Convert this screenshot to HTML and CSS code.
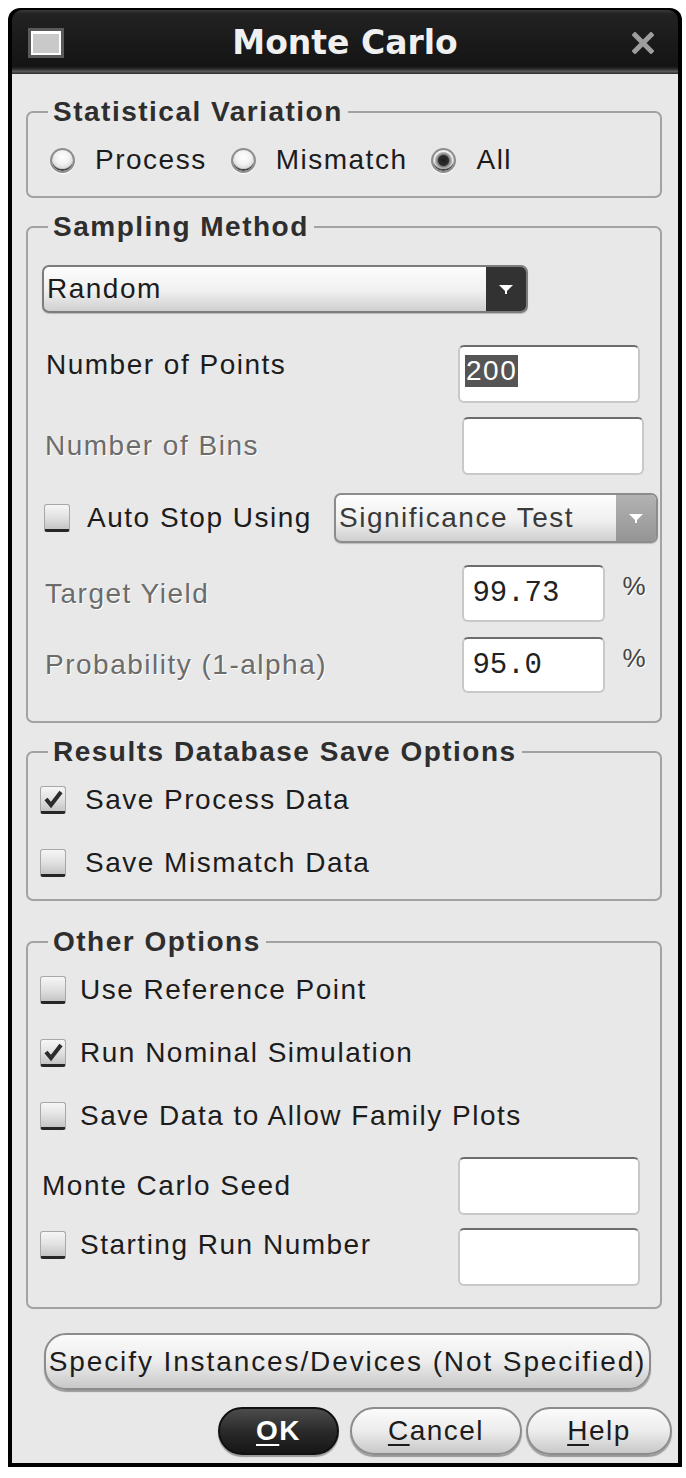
FILE: index.html
```html
<!DOCTYPE html>
<html lang="en">
<head>
<meta charset="utf-8">
<title>Monte Carlo</title>
<link rel="stylesheet" href="styles.css">
</head>
<body>
<div class="window">
  <div class="titlebar">
    <svg class="win-icon" width="36" height="30" viewBox="0 0 36 30">
      <rect x="0" y="0" width="36" height="30" fill="#5a5a5a"/>
      <rect x="3" y="3" width="30" height="24" fill="#ffffff"/>
      <rect x="5" y="6" width="26" height="19" fill="#c9c9c9"/>
    </svg>
    <div class="title">Monte Carlo</div>
    <svg class="close" width="22" height="22" viewBox="0 0 22 22">
      <path d="M3 3 L19 19 M19 3 L3 19" stroke="#9d9d9d" stroke-width="5" stroke-linecap="square"/>
    </svg>
  </div>

  <div class="client">
    <fieldset class="group g-stat">
      <legend>Statistical Variation</legend>
      <div class="radios">
        <span class="radio"><span class="rb"></span>Process</span>
        <span class="radio"><span class="rb"></span>Mismatch</span>
        <span class="radio"><span class="rb on"></span>All</span>
      </div>
    </fieldset>

    <fieldset class="group g-sampling">
      <legend>Sampling Method</legend>
      <div class="combo combo-random">
        <span class="combo-text">Random</span>
        <span class="combo-arrow"><svg width="16" height="10" viewBox="0 0 16 10"><path d="M1 1 H15 L8 8 Z" fill="#fff"/><rect x="7" y="7" width="2" height="3" fill="#fff"/></svg></span>
      </div>
      <div class="field-row r-points">
        <span class="lbl top">Number of Points</span>
        <span class="input in-points"><span class="sel">200</span></span>
      </div>
      <div class="field-row r-bins">
        <span class="lbl dis">Number of Bins</span>
        <span class="input in-bins"></span>
      </div>
      <div class="field-row r-auto">
        <span class="check-row"><span class="cb"></span>Auto Stop Using</span>
        <div class="combo combo-sig">
          <span class="combo-text">Significance Test</span>
          <span class="combo-arrow light"><svg width="16" height="10" viewBox="0 0 16 10"><path d="M1 1 H15 L8 8 Z" fill="#fff"/><rect x="7" y="7" width="2" height="3" fill="#fff"/></svg></span>
        </div>
      </div>
      <div class="field-row r-target">
        <span class="lbl dis">Target Yield</span>
        <span class="input in-num mono">99.73</span>
        <span class="pct">%</span>
      </div>
      <div class="field-row r-prob">
        <span class="lbl dis">Probability (1-alpha)</span>
        <span class="input in-num mono">95.0</span>
        <span class="pct">%</span>
      </div>
    </fieldset>

    <fieldset class="group g-results">
      <legend>Results Database Save Options</legend>
      <div class="check-row r-first"><span class="cb checked"><svg width="22" height="22" viewBox="0 0 22 22"><path d="M4 11 L9 17 L19 4" stroke="#2b2b2b" stroke-width="4" fill="none"/></svg></span>Save Process Data</div>
      <div class="check-row r-next"><span class="cb"></span>Save Mismatch Data</div>
    </fieldset>

    <fieldset class="group g-other">
      <legend>Other Options</legend>
      <div class="check-row r-first"><span class="cb"></span>Use Reference Point</div>
      <div class="check-row r-next"><span class="cb checked"><svg width="22" height="22" viewBox="0 0 22 22"><path d="M4 11 L9 17 L19 4" stroke="#2b2b2b" stroke-width="4" fill="none"/></svg></span>Run Nominal Simulation</div>
      <div class="check-row r-next"><span class="cb"></span>Save Data to Allow Family Plots</div>
      <div class="field-row r-seed">
        <span class="lbl">Monte Carlo Seed</span>
        <span class="input in-seed"></span>
      </div>
      <div class="field-row r-start">
        <span class="check-row top"><span class="cb"></span>Starting Run Number</span>
        <span class="input in-seed"></span>
      </div>
    </fieldset>

    <div class="btn btn-specify">Specify Instances/Devices (Not Specified)</div>

    <div class="btn-row">
      <div class="btn btn-ok"><u>O</u>K</div>
      <div class="btn btn-cancel"><u>C</u>ancel</div>
      <div class="btn btn-help"><u>H</u>elp</div>
    </div>
  </div>
</div>
</body>
</html>
```

FILE: styles.css
```css
* { box-sizing: border-box; }
html, body { margin: 0; background: #ffffff; }
body {
  font-family: "Liberation Sans", Arial, sans-serif;
  font-size: 28px;
  letter-spacing: 1.5px;
  color: #1c1c1c;
}

.window {
  width: 674px;
  margin: 8px 0 0 8px;
  background: #000;
  border-radius: 12px 12px 0 0;
  padding: 2px 4px 4px;
}

.titlebar {
  height: 64px;
  display: grid;
  grid-template-columns: 1fr auto 1fr;
  align-items: center;
  padding: 2px 16px 0;
  border-radius: 10px 10px 0 0;
  background: linear-gradient(#3a3a3a 0, #222 4px, #1a1a1a 50%, #141414 88%, #2a2a2a 92%, #5a5a5a 96%, #2a2a2a 100%);
}
.win-icon { justify-self: start; display: block; }
.title {
  font-family: "DejaVu Sans", sans-serif;
  font-weight: bold;
  font-size: 33px;
  letter-spacing: 0;
  color: #f0f0f0;
  line-height: 40px;
}
.close { justify-self: end; margin-right: 8px; display: block; }

.client {
  background: #e8e8e8;
  padding: 22px 16px 8px 14px;
}

.group {
  margin: 0;
  padding: 0 2px 0 14px;
  border: 2px solid #a2a2a2;
  border-radius: 7px;
  min-width: 0;
}
.group legend {
  padding: 0 5px;
  margin-left: 6px;
  font-weight: bold;
  line-height: 32px;
  color: #2e2e2e;
}
.g-stat { padding-bottom: 20px; }
.g-sampling { margin-top: 13px; padding-bottom: 28px; }
.g-results { margin-top: 13px; padding-bottom: 20px; }
.g-other { margin-top: 25px; padding-bottom: 21px; }

/* radios */
.radios {
  margin-top: 16px;
  height: 32px;
  display: flex;
  align-items: center;
  padding-left: 8px;
}
.radio { display: flex; align-items: center; margin-right: 24px; }
.rb {
  width: 25px;
  height: 25px;
  border-radius: 50%;
  border: 2px solid #8e8e8e;
  background: radial-gradient(circle at 50% 35%, #ffffff 0, #f2f2f2 40%, #bcbcbc 100%);
  box-shadow: inset 0 -3px 1px -1px #3a3a3a, 0 1px 1px #fff;
  margin-right: 20px;
}
.rb.on {
  background:
    radial-gradient(circle at 50% 50%, #1e1e1e 0, #2e2e2e 5px, #7a7a7a 6px, #b5b5b5 8px, transparent 9px),
    radial-gradient(circle at 50% 35%, #ffffff 0, #f2f2f2 40%, #bcbcbc 100%);
}

/* combos */
.combo {
  display: flex;
  align-items: stretch;
  border: 2px solid #7c7c7c;
  border-radius: 7px;
  overflow: hidden;
  background: linear-gradient(#fdfdfd 0, #f0f0f0 55%, #cfcfcf 100%);
  box-shadow: 0 1px 1px #bbb;
}
.combo-text { flex: 1; display: flex; align-items: center; padding-left: 3px; }
.combo-arrow {
  width: 40px;
  background: #323232;
  display: flex;
  align-items: center;
  justify-content: center;
}
.combo-arrow.light { background: linear-gradient(#b2b2b2, #959595); }
.combo-random { margin-top: 22px; width: 486px; height: 48px; }
.combo-sig { width: 324px; height: 50px; border-color: #8c8c8c; }
.combo-sig .combo-text { color: #3a3a3a; }

/* field rows */
.field-row {
  display: flex;
  align-items: center;
  justify-content: space-between;
}
.lbl { padding-left: 4px; }
.lbl.dis { color: #6c6c6c; text-shadow: 1px 1px 0 #ffffff; padding-left: 3px; }
.r-points { margin-top: 32px; height: 58px; align-items: flex-start; }
.r-points .lbl { line-height: 40px; }
.r-bins { margin-top: 14px; height: 58px; }
.r-auto { margin-top: 18px; height: 50px; }
.r-target { margin-top: 22px; height: 57px; }
.r-prob { margin-top: 15px; height: 56px; }
.r-seed { margin-top: 25px; height: 58px; }
.r-seed .lbl { padding-left: 0; }
.r-start { margin-top: 13px; height: 58px; align-items: flex-start; }
.r-start .check-row { height: 34px; }

.input {
  display: flex;
  align-items: center;
  height: 100%;
  background: #ffffff;
  border: 2px solid #c8c8c8;
  border-top-color: #6c6c6c;
  border-radius: 6px;
  padding-left: 5px;
}
.in-points { width: 182px; margin-right: 18px; align-items: flex-start; padding-top: 8px; }
.in-bins { width: 182px; margin-right: 14px; }
.in-num { width: 143px; margin-left: auto; padding-left: 8px; }
.in-seed { width: 182px; margin-right: 18px; }
.mono {
  font-family: "Liberation Mono", "DejaVu Sans Mono", monospace;
  font-size: 29px;
  letter-spacing: 0;
  color: #222;
}
.sel { background: #555555; color: #ffffff; padding: 0 1px; line-height: 32px; }
.pct {
  align-self: flex-start;
  margin-top: 6px;
  margin-left: 17px;
  margin-right: 11px;
  font-size: 26px;
  color: #444;
  text-shadow: 1px 1px 0 #fff;
}

/* checkboxes */
.check-row { display: flex; align-items: center; height: 32px; }
.cb {
  width: 26px;
  height: 28px;
  border: 1px solid #a8a8a8;
  border-bottom: 3px solid #262626;
  border-radius: 3px;
  background: linear-gradient(#f6f6f6 0, #e2e2e2 50%, #c4c4c4 100%);
  margin-right: 17px;
  display: flex;
  align-items: center;
  justify-content: center;
  flex: none;
}
.cb svg { display: block; }
.r-auto .check-row { padding-left: 2px; }
.g-results .check-row, .g-other .check-row { margin-left: -2px; }
.g-other .check-row .cb { margin-right: 14px; }
.g-results .check-row .cb { margin-right: 19px; }
.r-first { margin-top: 16px; }
.r-next { margin-top: 31px; }

/* buttons */
.btn {
  display: flex;
  align-items: center;
  justify-content: center;
  white-space: nowrap;
  border: 2px solid #8c8c8c;
  background: linear-gradient(#fbfbfb 0, #ececec 50%, #c8c8c8 100%);
  border-radius: 24px;
  box-shadow: 0 2px 1px #9a9a9a;
}
.btn-specify {
  margin: 24px 0 0 18px;
  width: 607px;
  height: 57px;
  border-radius: 22px;
  letter-spacing: 1.9px;
}
.btn-row {
  margin-top: 17px;
  margin-right: -10px;
  display: flex;
  justify-content: flex-end;
}
.btn-row .btn { height: 48px; }
.btn-ok {
  width: 121px;
  margin-right: 11px;
  background: linear-gradient(#4c4c4c 0, #2a2a2a 50%, #161616 100%);
  border-color: #111;
  color: #ffffff;
  font-weight: bold;
}
.btn-cancel { width: 172px; margin-right: 4px; }
.btn-help { width: 146px; }
u { text-decoration-thickness: 2px; text-underline-offset: 4px; }
```
